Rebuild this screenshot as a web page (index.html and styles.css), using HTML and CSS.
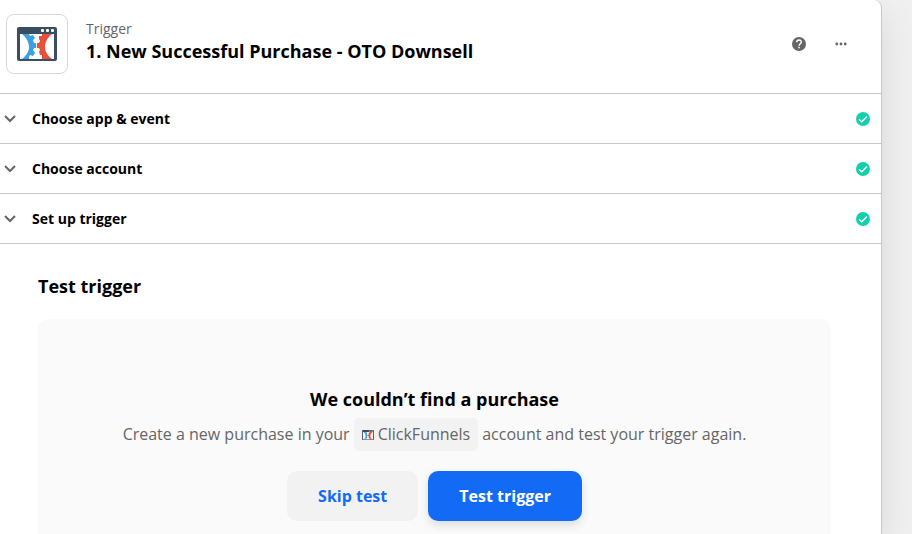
FILE: index.html
```html
<!DOCTYPE html>
<html lang="en">
<head>
    <meta charset="UTF-8">
    <meta name="viewport" content="width=device-width, initial-scale=1.0">
    <title>New Successful Purchase - OTO Downsell</title>
    <link rel="stylesheet" href="styles.css">
</head>
<body>
    <!-- Shared icons -->
    <svg class="icon-defs" aria-hidden="true">
        <symbol id="icon-app" viewBox="0 0 40 34">
            <rect width="40" height="34" rx="2" fill="#3b4d61"/>
            <path d="M3 7h34v25H3z" fill="#fff"/>
            <path d="M5 7h7l1 2 3-1 2 3-2 2 1 3h2v5h-2l-1 2 2 3-2 3-3-1-1 2v2H5c5-4 7-8 7-12S10 11 5 7z" fill="#3b9fe0"/>
            <path d="M35 7H25v2l-3 0 0 3 1 2-1 2h-2v5h2l1 2-1 2 1 3 2 0v4h10c-5-4-7-8-7-12S30 11 35 7z" fill="#e8503a"/>
            <rect x="24" y="2" width="3" height="3" rx="1" fill="#fff"/>
            <rect x="29" y="2" width="3" height="3" rx="1" fill="#fff"/>
            <rect x="34" y="2" width="3" height="3" rx="1" fill="#fff"/>
        </symbol>
        <symbol id="icon-chevron" viewBox="0 0 12 8">
            <path d="M1 1l5 5 5-5" fill="none" stroke="#666" stroke-width="2"/>
        </symbol>
        <symbol id="icon-check" viewBox="0 0 14 14">
            <circle cx="7" cy="7" r="7" fill="#13d0ac"/>
            <path d="M3 7.2l2.7 2.6L11 4.5" fill="none" stroke="#fff" stroke-width="1.4"/>
        </symbol>
    </svg>

    <main class="panel">
        <header class="panel-header">
            <div class="app-logo">
                <svg width="40" height="34"><use href="#icon-app"/></svg>
            </div>
            <div class="panel-title">
                <p>Trigger</p>
                <h1>1. New Successful Purchase - OTO Downsell</h1>
            </div>
            <div class="panel-actions">
                <button type="button" class="icon-button" aria-label="Help">
                    <svg width="14" height="14" viewBox="0 0 14 14">
                        <circle cx="7" cy="7" r="7" fill="#666"/>
                        <path d="M4.7 5.3c0-1.4 1-2.3 2.3-2.3s2.3.9 2.3 2.1c0 1.7-2.2 1.7-2.2 3.7" fill="none" stroke="#fff" stroke-width="1.4"/>
                        <path d="M6.3 9.8h1.5v1.5H6.3z" fill="#fff"/>
                    </svg>
                </button>
                <button type="button" class="icon-button" aria-label="More options">
                    <svg width="14" height="14" viewBox="0 0 14 14" fill="#666">
                        <circle cx="2.8" cy="7" r="1.4"/>
                        <circle cx="7" cy="7" r="1.4"/>
                        <circle cx="11.2" cy="7" r="1.4"/>
                    </svg>
                </button>
            </div>
        </header>

        <button type="button" class="step">
            <svg width="12" height="8"><use href="#icon-chevron"/></svg>
            <span class="step-name">Choose app &amp; event</span>
            <svg width="14" height="14"><use href="#icon-check"/></svg>
        </button>
        <button type="button" class="step">
            <svg width="12" height="8"><use href="#icon-chevron"/></svg>
            <span class="step-name">Choose account</span>
            <svg width="14" height="14"><use href="#icon-check"/></svg>
        </button>
        <button type="button" class="step">
            <svg width="12" height="8"><use href="#icon-chevron"/></svg>
            <span class="step-name">Set up trigger</span>
            <svg width="14" height="14"><use href="#icon-check"/></svg>
        </button>

        <section class="test">
            <h2>Test trigger</h2>
            <div class="test-card">
                <h3>We couldn’t find a purchase</h3>
                <p class="test-text">
                    Create a new purchase in your
                    <span class="app-tag"><svg width="12" height="10"><use href="#icon-app"/></svg>ClickFunnels</span>
                    account and test your trigger again.
                </p>
                <div class="test-buttons">
                    <button type="button" class="button">Skip test</button>
                    <button type="button" class="button button-primary">Test trigger</button>
                </div>
            </div>
        </section>
    </main>
</body>
</html>
```
FILE: styles.css
```css
* {
    box-sizing: border-box;
}

body {
    display: flex;
    min-height: 100vh;
    margin: 0;
    padding-right: 30px;
    background-color: #f0f0f0;
    color: #000;
    font-family: "Open Sans", "Noto Sans", sans-serif;
}

h1, h2, h3, p {
    margin: 0;
}

h1, h2, h3 {
    font-size: 18px;
    line-height: 24px;
    font-weight: 700;
}

button {
    border: none;
    font-family: inherit;
    cursor: pointer;
}

svg {
    display: block;
    flex-shrink: 0;
}

.icon-defs {
    position: absolute;
    width: 0;
    height: 0;
}

.panel {
    display: flex;
    flex-direction: column;
    flex: 1;
    background-color: #fff;
    border-right: 1px solid #c8c8c8;
    border-top-right-radius: 8px;
    box-shadow: 0 12px 36px rgba(0, 0, 0, 0.1);
}

/* Header */
.panel-header {
    display: flex;
    align-items: flex-start;
    padding: 14px 26px 19px 6px;
    border-bottom: 1px solid #c8c8c8;
}

.app-logo {
    display: flex;
    align-items: center;
    justify-content: center;
    width: 62px;
    height: 60px;
    border: 1px solid #d8d8d8;
    border-radius: 8px;
}

.panel-title {
    flex: 1;
    padding: 5px 0 0 18px;
}

.panel-title p {
    color: #666;
    font-size: 14px;
    line-height: 20px;
}

.panel-actions {
    display: flex;
    align-self: center;
    gap: 14px;
}

.icon-button {
    padding: 7px;
    background: none;
}

/* Steps */
.step {
    display: flex;
    align-items: center;
    width: 100%;
    height: 50px;
    padding: 0 11px 0 4px;
    background: none;
    border-bottom: 1px solid #c8c8c8;
    text-align: left;
}

.step-name {
    flex: 1;
    padding-left: 16px;
    color: #000;
    font-size: 14px;
    line-height: 20px;
    font-weight: 700;
}

/* Test trigger */
.test {
    display: flex;
    flex-direction: column;
    flex: 1;
    padding: 30px 50px 0 38px;
}

.test-card {
    flex: 1;
    margin-top: 21px;
    padding: 68px 20px 12px;
    background-color: #fafafa;
    border-radius: 10px 10px 0 0;
    text-align: center;
}

.test-text {
    display: flex;
    flex-wrap: wrap;
    justify-content: center;
    gap: 4px;
    margin-top: 7px;
    color: #666;
    font-size: 16px;
    line-height: 33px;
}

.app-tag {
    display: inline-flex;
    align-items: center;
    gap: 4px;
    padding: 0 8px;
    background-color: #f2f2f2;
    border-radius: 5px;
}

.test-buttons {
    display: flex;
    justify-content: center;
    gap: 10px;
    margin-top: 20px;
}

.button {
    height: 50px;
    padding: 0 31px;
    background-color: #f2f2f2;
    border-radius: 10px;
    color: #136bf5;
    font-size: 16px;
    line-height: 24px;
    font-weight: 700;
}

.button-primary {
    background-color: #136bf5;
    color: #fff;
    box-shadow: 0 4px 10px rgba(0, 0, 0, 0.12);
}
```
